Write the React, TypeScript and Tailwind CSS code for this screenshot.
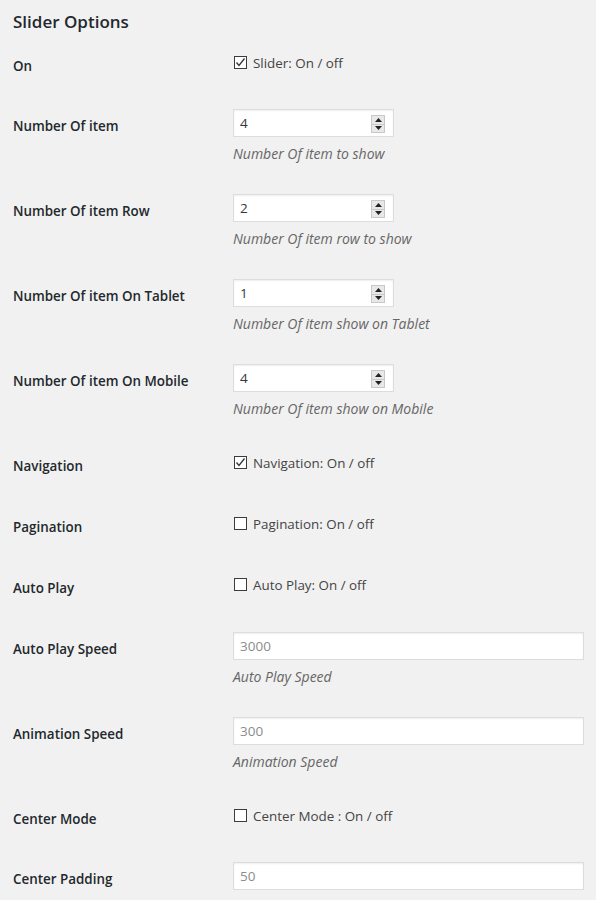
import React from "react";

type Field =
  | { kind: "check"; label: string; text: string; checked: boolean; h: string }
  | { kind: "number"; label: string; value: string; desc: string; h: string }
  | { kind: "text"; label: string; value: string; desc?: string; h: string };

const fields: Field[] = [
  { kind: "check", label: "On", text: "Slider: On / off", checked: true, h: "h-[60px]" },
  { kind: "number", label: "Number Of item", value: "4", desc: "Number Of item to show", h: "h-[85px]" },
  { kind: "number", label: "Number Of item Row", value: "2", desc: "Number Of item row to show", h: "h-[85px]" },
  { kind: "number", label: "Number Of item On Tablet", value: "1", desc: "Number Of item show on Tablet", h: "h-[85px]" },
  { kind: "number", label: "Number Of item On Mobile", value: "4", desc: "Number Of item show on Mobile", h: "h-[85px]" },
  { kind: "check", label: "Navigation", text: "Navigation: On / off", checked: true, h: "h-[61px]" },
  { kind: "check", label: "Pagination", text: "Pagination: On / off", checked: false, h: "h-[61px]" },
  { kind: "check", label: "Auto Play", text: "Auto Play: On / off", checked: false, h: "h-[61px]" },
  { kind: "text", label: "Auto Play Speed", value: "3000", desc: "Auto Play Speed", h: "h-[85px]" },
  { kind: "text", label: "Animation Speed", value: "300", desc: "Animation Speed", h: "h-[85px]" },
  { kind: "check", label: "Center Mode", text: "Center Mode : On / off", checked: false, h: "h-[60px]" },
  { kind: "text", label: "Center Padding", value: "50", h: "h-[60px]" },
];

function Checkbox({ checked }: { checked: boolean }) {
  return (
    <span className="mt-[2px] mr-[6px] flex h-[13px] w-[13px] shrink-0 items-center justify-center border border-[#3c3c3c] bg-white">
      {checked && (
        <svg width="11" height="11" viewBox="0 0 11 11">
          <polyline points="1.5,5.5 4,8.5 9.5,1.5" fill="none" stroke="#333" strokeWidth="1.3" />
        </svg>
      )}
    </span>
  );
}

function Spinner() {
  return (
    <span className="absolute right-[8px] top-[5px] flex h-[18px] w-[14px] flex-col border border-[#c8c8c8] bg-[#e8e8e8]">
      <span className="flex flex-1 items-center justify-center border-b border-[#c8c8c8]">
        <svg width="7" height="4" viewBox="0 0 7 4">
          <polygon points="3.5,0 7,4 0,4" fill="#222" />
        </svg>
      </span>
      <span className="flex flex-1 items-center justify-center">
        <svg width="7" height="4" viewBox="0 0 7 4">
          <polygon points="0,0 7,0 3.5,4" fill="#222" />
        </svg>
      </span>
    </span>
  );
}

function Row({ f }: { f: Field }) {
  return (
    <div className={`flex ${f.h}`}>
      <div className="w-[233px] shrink-0 pl-[13px] pt-[20px] text-[13.4px] font-semibold leading-[18px] text-[#23282d]">
        {f.label}
      </div>
      <div className="flex-1">
        {f.kind === "check" ? (
          <div className="flex items-start pl-[1px] pt-[17px] text-[13.4px] leading-[18px] text-[#444]">
            <Checkbox checked={f.checked} />
            <span>{f.text}</span>
          </div>
        ) : (
          <div className="pt-[12px]">
            <div
              className={`relative flex h-[28px] items-center border border-[#dddddd] bg-white pl-[6px] text-[13.5px] shadow-[inset_0_1px_2px_rgba(0,0,0,0.07)] ${
                f.kind === "number" ? "w-[161px] text-[#32373c]" : "w-[351px] text-[#8c8c8c]"
              }`}
            >
              {f.value}
              {f.kind === "number" && <Spinner />}
            </div>
            {f.desc && (
              <p className="mt-[8px] text-[14px] italic leading-[18px] text-[#666]">{f.desc}</p>
            )}
          </div>
        )}
      </div>
    </div>
  );
}

export default function App() {
  return (
    <div
      className="h-[900px] w-[596px] overflow-hidden bg-[#f1f1f1] text-[#23282d]"
      style={{ fontFamily: '"Open Sans", "Noto Sans", sans-serif' }}
    >
      <div className="h-[37px] pl-[13px] pt-[10px]">
        <h2 className="text-[17px] font-semibold leading-[24px]">Slider Options</h2>
      </div>
      {fields.map((f) => (
        <Row key={f.label} f={f} />
      ))}
    </div>
  );
}
